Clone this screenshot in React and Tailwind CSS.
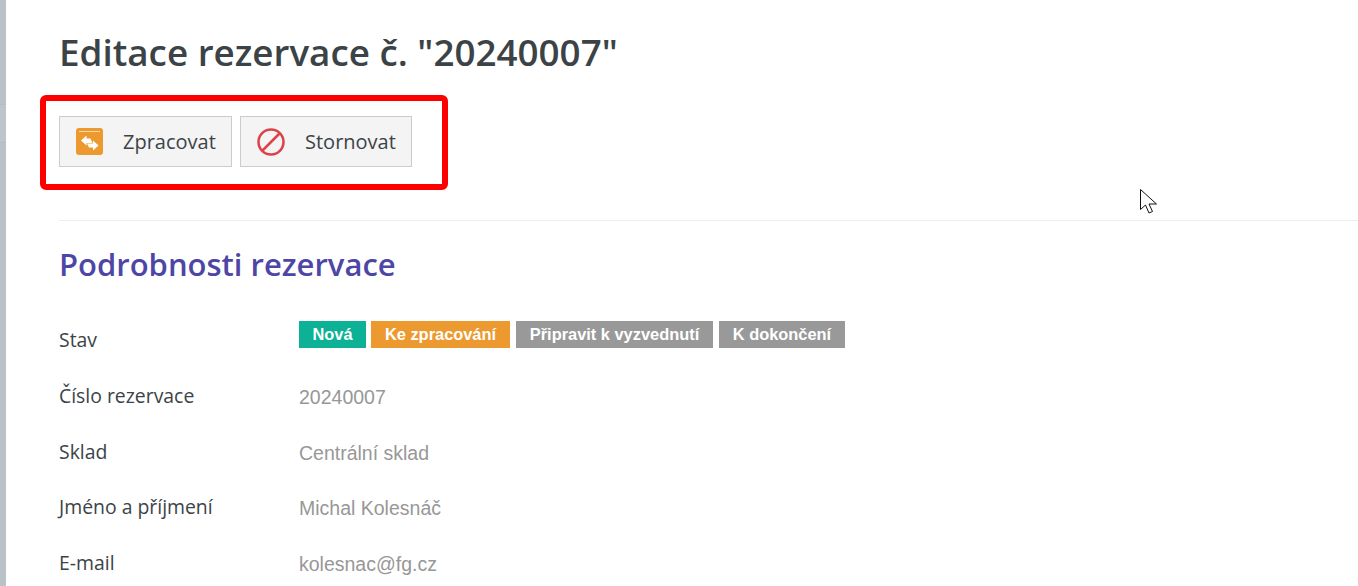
const rows = [
  { label: 'Číslo rezervace', value: '20240007' },
  { label: 'Sklad', value: 'Centrální sklad' },
  { label: 'Jméno a příjmení', value: 'Michal Kolesnáč' },
  { label: 'E-mail', value: 'kolesnac@fg.cz' },
];

const badges = [
  { text: 'Nová', color: 'bg-[#0db195]', width: 'w-[67px]', gap: 'mr-[5px]' },
  { text: 'Ke zpracování', color: 'bg-[#ec992f]', width: 'w-[139px]', gap: 'mr-[6px]' },
  { text: 'Připravit k vyzvednutí', color: 'bg-[#999999]', width: 'w-[197px]', gap: 'mr-[6px]' },
  { text: 'K dokončení', color: 'bg-[#999999]', width: 'w-[126px]', gap: '' },
];

const ProcessIcon = () => (
  <svg width="27" height="27" viewBox="0 0 27 27">
    <path d="M3 0H24Q27 0 27 3V24Q27 27 24 27H3Q0 27 0 24V3Q0 0 3 0Z" fill="#ec992f" />
    <path d="M3 3.5H24" stroke="#f8d9a8" strokeWidth="1" />
    <path d="M5 12.5L10.5 7.5V10.5H14.5L16.5 15H10.5V17.5Z" fill="#fff" />
    <path d="M22.5 17.5L17 22.5V19.5H13L11 15.5H17V12.5Z" fill="#fff" />
  </svg>
);

const CancelIcon = () => (
  <svg width="28" height="28" viewBox="0 0 28 28" fill="none" stroke="#dc4249" strokeWidth="2.5">
    <circle cx="14" cy="14" r="12.5" />
    <path d="M5.5 22.5L22.5 5.5" />
  </svg>
);

const Cursor = () => (
  <svg width="20" height="28" viewBox="0 0 20 28" fill="#fff" stroke="#111" strokeWidth="1">
    <path d="M1.5 1.5V21.5L6.5 17L10 25L13.5 23.5L10 16H17.5Z" />
  </svg>
);

function App() {
  return (
    <div className="flex h-[586px] w-[1358px] overflow-hidden bg-white font-['Open_Sans',sans-serif]">
      {/* Blurred side panel */}
      <div className="w-[6px] shrink-0 bg-[#b9c2c6] pt-[104px]">
        <div className="h-[39px] border-y border-[#b3bcc0] bg-[#bcc5c9]" />
      </div>

      <div className="relative flex-1 pl-[53px]">
        <h1 className="mt-[26px] text-[36.8px] font-semibold leading-[52px] text-[#3c4347]">
          Editace rezervace č. "20240007"
        </h1>

        {/* Red annotation round the buttons */}
        <div className="-ml-[19px] mt-[17px] flex h-[95px] w-[408px] items-start gap-2 rounded-md border-[6px] border-[#ff0000] pl-[13px] pt-[15px]">
          <button className="flex h-[51px] w-[173px] items-center border border-[#cccccc] bg-[#f4f4f4] pl-[16px] text-[20px] font-medium text-[#3c4347]">
            <ProcessIcon />
            <span className="ml-[20px]">Zpracovat</span>
          </button>
          <button className="flex h-[51px] w-[172px] items-center border border-[#cccccc] bg-[#f4f4f4] pl-[16px] text-[20px] font-medium text-[#3c4347]">
            <CancelIcon />
            <span className="ml-[20px]">Stornovat</span>
          </button>
        </div>

        <div className="mt-[30px] border-t border-[#eeeeee]" />

        <h2 className="mt-[21px] text-[31px] font-semibold leading-[44px] text-[#4e46a6]">
          Podrobnosti rezervace
        </h2>

        <div className="mt-[35px] flex h-[27px] items-start">
          <div className="mt-[6px] w-[240px] text-[19.4px] leading-[26px] text-[#3c4347]">Stav</div>
          <div className="flex">
            {badges.map((b) => (
              <span
                key={b.text}
                className={`flex h-[27px] items-center justify-center font-['Liberation_Sans',sans-serif] text-[16.4px] font-bold text-white ${b.color} ${b.width} ${b.gap}`}
              >
                {b.text}
              </span>
            ))}
          </div>
        </div>

        <div className="mt-[36px] flex flex-col gap-[29.5px]">
          {rows.map((r) => (
            <div key={r.label} className="flex h-[26px] items-center">
              <div className="-mt-[2px] w-[240px] text-[19.4px] text-[#3c4347]">{r.label}</div>
              <div className="mt-[2px] font-['Liberation_Sans',sans-serif] text-[19.5px] text-[#979797]">{r.value}</div>
            </div>
          ))}
        </div>

        {/* Mouse pointer */}
        <div className="absolute left-[1133px] top-[188px]">
          <Cursor />
        </div>
      </div>
    </div>
  );
}

export default App;
